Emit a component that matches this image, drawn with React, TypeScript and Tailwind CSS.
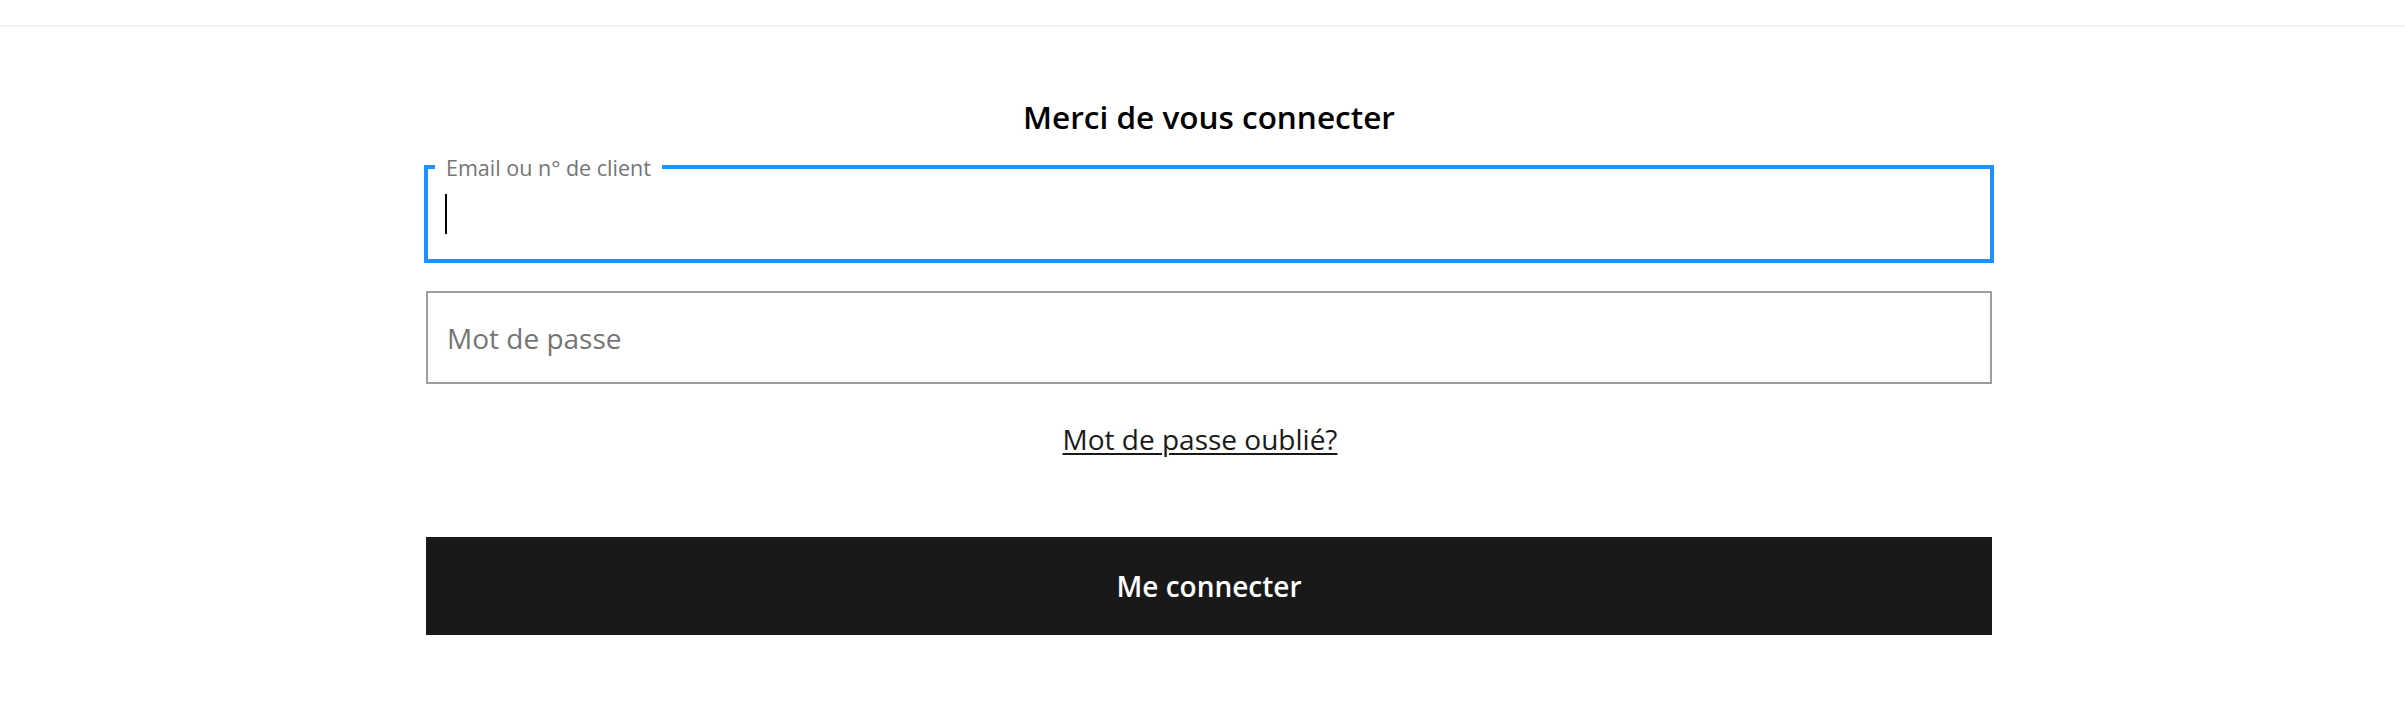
export default function App() {
  return (
    <div className="min-h-[707px] bg-white font-['Open_Sans',sans-serif]">
      <div className="h-[27px] border-b-2 border-[#f2f2f2]" />

      <div className="flex justify-center pl-[13px]">
        <form className="w-[1566px]" onSubmit={(e) => e.preventDefault()}>
          <h1 className="mt-[70px] text-center text-[31.5px] leading-[40px] font-semibold text-black">
            Merci de vous connecter
          </h1>

          <div className="relative -mx-[2px] mt-[28px] flex h-[98px] items-center border-4 border-[#1e90ff] pl-[17px]">
            <label className="absolute top-[-13px] left-[7px] bg-white px-[11px] text-[21.5px] leading-[24px] text-[#757575]">
              Email ou n° de client
            </label>
            <span className="h-[40px] w-[2px] bg-black" />
          </div>

          <div className="mt-[28px] flex h-[93px] items-center border-2 border-[#9e9e9e] pl-[19px]">
            <span className="text-[28px] text-[#757575]">Mot de passe</span>
          </div>

          <div className="mt-[37px] flex justify-center pr-[18px]">
            <a
              href="#"
              className="text-[28px] leading-[36px] text-[#1a1a1a] underline decoration-2 underline-offset-[3px]"
            >
              Mot de passe oublié?
            </a>
          </div>

          <button
            type="submit"
            className="mt-[80px] flex h-[98px] w-full items-center justify-center bg-[#191919] text-[28px] font-semibold text-white"
          >
            Me connecter
          </button>
        </form>
      </div>
    </div>
  );
}
